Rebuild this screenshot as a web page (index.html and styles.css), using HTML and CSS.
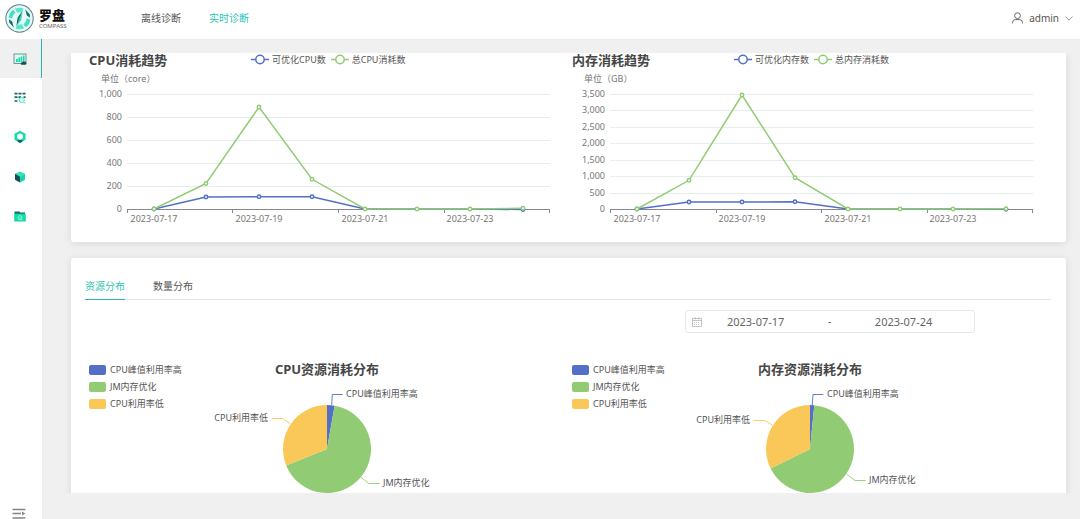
FILE: index.html
```html
<!DOCTYPE html>
<html lang="zh-CN">
<head>
<meta charset="utf-8">
<title>罗盘</title>
<link rel="stylesheet" href="styles.css">
</head>
<body>
<header class="topbar">
  <a class="brand" href="#">
    <svg class="brand-mark" viewBox="0 0 28 28" aria-hidden="true">
      <circle cx="14" cy="14" r="13.2" fill="#e6f9f6" stroke="#5b8587" stroke-width="1"/>
      <path d="M3.600 13A10.400 10.400 0 0 1 8 5.500l2.200 3A7 7 0 0 0 7 14z" fill="#3fe0c0"/>
      <path d="M24.400 15A10.400 10.400 0 0 1 20 22.500l-2.200-3A7 7 0 0 0 21 14z" fill="#3fe0c0"/>
      <path d="M9.500 4.700A10.400 10.400 0 0 1 18 4.400l-1.800 3.400-4.400.600z" fill="#59e6cc"/>
      <path d="M18.500 23.300A10.400 10.400 0 0 1 10 23.600l1.800-3.400 4.400-.600z" fill="#59e6cc"/>
      <path d="M19.500 5.200l4.300 4.800.5 3.200-3.200-2.200z" fill="#1b6d6c"/>
      <path d="M8.500 22.800l-4.300-4.800-.5-3.200 3.200 2.200z" fill="#1b6d6c"/>
      <path d="M17 6.500l-5 6.700 2.500.8z" fill="#147b78"/>
      <path d="M11 21.500l5-6.700-2.500-.8z" fill="#22c9ad"/>
      <path d="M17 6.500L14 14.500l2-.3z" fill="#37dfbe"/>
      <path d="M11 21.500l3-8-2 .3z" fill="#175f63"/>
    </svg>
    <span class="brand-text"><strong class="brand-name">罗盘</strong><small class="brand-sub">COMPASS</small></span>
  </a>
  <nav class="topnav">
    <a href="#">离线诊断</a>
    <a class="is-active" href="#">实时诊断</a>
  </nav>
  <button class="user" type="button">
    <svg class="user-icon" viewBox="0 0 11 12" aria-hidden="true"><circle cx="5.500" cy="3.700" r="2.900"/><path d="M.6 11.500V10.300Q.6 7.600 3.400 7.600H7.600Q10.400 7.600 10.400 10.300V11.500"/></svg>
    <span>admin</span>
    <svg class="chevron" viewBox="0 0 8 5" aria-hidden="true"><path d="M.5.6 4 4.100 7.500.6"/></svg>
  </button>
</header>
<div class="body">
  <aside class="sidebar">
    <nav class="menu">
      <a class="menu-item is-active" href="#" aria-label="概览"><svg viewBox="0 0 14 14"><rect x="1" y="2" width="12" height="9.500" fill="#dff8f3" stroke="#4b7f83" stroke-width=".8"/><path d="M3 7h1.800v3H3zM5.400 5.500h1.800V10H5.400zM7.800 4.500h1.500V10H7.800zM10 3.500h1.500V9H10z" fill="#16dca5"/><path d="M8 12.800q-.8-2.300 1.300-2.500.5-1.700 2.200-.9 1.700-.1 1.700 1.300.8 1.300-.6 2.100z" fill="#14525c"/></svg></a>
      <a class="menu-item" href="#" aria-label="任务列表"><svg viewBox="0 0 14 14"><path d="M1.500 2.700h3M5.500 2.700h3M9.500 2.700h3M1.500 6.200h3M5.500 6.200h2.500M10.500 6.200h2M1.500 10h3" stroke="#14656b" stroke-width="1.700"/><circle cx="8.700" cy="9" r="2.600" fill="#d9fff5" stroke="#54e2c3" stroke-width="1"/><path d="M10.600 10.800l1.800 1.700" stroke="#54e2c3"/></svg></a>
      <a class="menu-item" href="#" aria-label="诊断配置"><svg viewBox="0 0 14 14"><path d="M7 .8l5.500 3v6L7 13 1.500 9.800v-6z" fill="#13dba5"/><circle cx="7" cy="6.600" r="3" fill="#fff"/><path d="M4.700 9.900h4.600v1.600L7 13l-2.300-1.500z" fill="#115f67"/></svg></a>
      <a class="menu-item" href="#" aria-label="资源"><svg viewBox="0 0 14 14"><path d="M7 1.500l5 2.300-5 2.700-5-2.700z" fill="#32e4b4"/><path d="M2 3.800l5 2.700v6L2 9.700z" fill="#124f5a"/><path d="M12 3.800L7 6.500v6l5-2.800z" fill="#13d9a3"/></svg></a>
      <a class="menu-item" href="#" aria-label="归档"><svg viewBox="0 0 14 14"><path d="M1.500 2.500h5l1 1H12v2H1.500z" fill="#0d6f71"/><path d="M1.200 4.700h11.600v7.800H1.200z" fill="#15daa6"/><circle cx="7" cy="8.700" r="2" fill="none" stroke="#b3ffe8" stroke-width=".7"/><path d="M6 8.700l.8.800 1.600-1.600M8.500 10.200l1.200 1" fill="none" stroke="#b3ffe8" stroke-width=".7"/></svg></a>
    </nav>
    <button class="collapse" type="button" aria-label="展开菜单"><svg viewBox="0 0 14 12"><path d="M.5 2.500h13M.5 6.500H9M.5 11h13" stroke="#858585" stroke-width="1.500"/><path d="M10 4.500L13.300 6.500 10 8.500z" fill="#858585"/></svg></button>
  </aside>
  <main class="content">
    <div class="scroller">
      <section class="card trends">
        <article class="trend">
          <div class="trend-head">
            <h2 class="title">CPU消耗趋势</h2>
            <ul class="line-legend">
              <li class="blue"><svg viewBox="0 0 18 11"><path d="M0 5.500h18"/><circle cx="9" cy="5.500" r="4.200"/></svg>可优化CPU数</li>
              <li class="green"><svg viewBox="0 0 18 11"><path d="M0 5.500h18"/><circle cx="9" cy="5.500" r="4.200"/></svg>总CPU消耗数</li>
            </ul>
          </div>
          <svg class="plot" viewBox="0 0 483 160" role="img" aria-label="CPU消耗趋势">
            <path class="grid" d="M42 26.500H465M42 49.500H465M42 72.500H465M42 95.500H465M42 118.500H465"/>
            <path class="axis" d="M42 141.500H465M42.500 141v4M147.500 141v4M253.500 141v4M359.500 141v4M464.500 141v4"/>
            <text class="unit" x="16" y="14">单位（core）</text>
            <g class="y-labels"><text x="37" y="29">1,000</text><text x="37" y="52">800</text><text x="37" y="75">600</text><text x="37" y="98">400</text><text x="37" y="121">200</text><text x="37" y="144">0</text></g>
            <g class="x-labels"><text x="69" y="154">2023-07-17</text><text x="174" y="154">2023-07-19</text><text x="280" y="154">2023-07-21</text><text x="385" y="154">2023-07-23</text></g>
            <g class="series blue"><polyline points="69,141 121,129 174,128.700 227,128.700 280,141 332,141 385,141 438,141.500"/><circle cx="69" cy="141" r="1.700"/><circle cx="121" cy="129" r="1.700"/><circle cx="174" cy="128.700" r="1.700"/><circle cx="227" cy="128.700" r="1.700"/><circle cx="438" cy="141.500" r="1.700"/></g>
            <g class="series green"><polyline points="69,141 121,115.500 174,39 227,111.300 280,141 332,141 385,141 438,140.300"/><circle cx="69" cy="141" r="1.700"/><circle cx="121" cy="115.500" r="1.700"/><circle cx="174" cy="39" r="1.700"/><circle cx="227" cy="111.300" r="1.700"/><circle cx="280" cy="141" r="1.700"/><circle cx="332" cy="141" r="1.700"/><circle cx="385" cy="141" r="1.700"/><circle cx="438" cy="140.300" r="1.700"/></g>
          </svg>
        </article>
        <article class="trend">
          <div class="trend-head">
            <h2 class="title">内存消耗趋势</h2>
            <ul class="line-legend">
              <li class="blue"><svg viewBox="0 0 18 11"><path d="M0 5.500h18"/><circle cx="9" cy="5.500" r="4.200"/></svg>可优化内存数</li>
              <li class="green"><svg viewBox="0 0 18 11"><path d="M0 5.500h18"/><circle cx="9" cy="5.500" r="4.200"/></svg>总内存消耗数</li>
            </ul>
          </div>
          <svg class="plot" viewBox="0 0 483 160" role="img" aria-label="内存消耗趋势">
            <path class="grid" d="M42 26.500H465M42 42.500H465M42 59.500H465M42 75.500H465M42 92.500H465M42 108.500H465M42 125.500H465"/>
            <path class="axis" d="M42 141.500H465M42.500 141v4M148.500 141v4M253.500 141v4M359.500 141v4M464.500 141v4"/>
            <text class="unit" x="16" y="14">单位（GB）</text>
            <g class="y-labels"><text x="37" y="29">3,500</text><text x="37" y="45">3,000</text><text x="37" y="62">2,500</text><text x="37" y="78">2,000</text><text x="37" y="95">1,500</text><text x="37" y="111">1,000</text><text x="37" y="128">500</text><text x="37" y="144">0</text></g>
            <g class="x-labels"><text x="69" y="154">2023-07-17</text><text x="174" y="154">2023-07-19</text><text x="280" y="154">2023-07-21</text><text x="385" y="154">2023-07-23</text></g>
            <g class="series blue"><polyline points="69,141 121,134 174,134 227,133.700 280,141 332,141 385,141 438,141.300"/><circle cx="69" cy="141" r="1.700"/><circle cx="121" cy="134" r="1.700"/><circle cx="174" cy="134" r="1.700"/><circle cx="227" cy="133.700" r="1.700"/><circle cx="438" cy="141.300" r="1.700"/></g>
            <g class="series green"><polyline points="69,141 121,112.300 174,27 227,109.700 280,141 332,141 385,141 438,140.800"/><circle cx="69" cy="141" r="1.700"/><circle cx="121" cy="112.300" r="1.700"/><circle cx="174" cy="27" r="1.700"/><circle cx="227" cy="109.700" r="1.700"/><circle cx="280" cy="141" r="1.700"/><circle cx="332" cy="141" r="1.700"/><circle cx="385" cy="141" r="1.700"/><circle cx="438" cy="140.800" r="1.700"/></g>
          </svg>
        </article>
      </section>
      <section class="card distribution">
        <div class="tabs" role="tablist">
          <button class="tab is-active" type="button" role="tab" aria-selected="true">资源分布</button>
          <button class="tab" type="button" role="tab" aria-selected="false">数量分布</button>
        </div>
        <div class="range">
          <svg class="calendar" viewBox="0 0 10 10" aria-hidden="true"><path d="M.5 1.500h9v8h-9zM.5 3.500h9M3 0v2.500M7 0v2.500"/><path d="M2 5.500h6M2 7.500h6" stroke-dasharray="1 1"/></svg>
          <input type="text" value="2023-07-17" aria-label="开始日期">
          <span>-</span>
          <input type="text" value="2023-07-24" aria-label="结束日期">
        </div>
        <div class="pies">
          <article class="pie">
            <ul class="pie-legend"><li class="blue">CPU峰值利用率高</li><li class="green">JM内存优化</li><li class="yellow">CPU利用率低</li></ul>
            <svg viewBox="0 0 363 150" role="img" aria-label="CPU资源消耗分布">
              <text class="pie-title" x="122" y="16">CPU资源消耗分布</text>
              <path fill="#5470c6" d="M122 91V47A44 44 0 0 1 129.640 47.670z"/>
              <path fill="#91cc75" d="M122 91L129.640 47.670A44 44 0 1 1 81.200 107.480z"/>
              <path fill="#fac858" d="M122 91L81.200 107.480A44 44 0 0 1 122 47z"/>
              <g class="leaders"><path stroke="#5470c6" d="M126.700 47L127.300 36.500H137.700"/><path stroke="#fac858" d="M85 65.700L77.700 60.500H67"/><path stroke="#91cc75" d="M156 119.300L163.700 125.500H174.700"/></g>
              <text x="141" y="39">CPU峰值利用率高</text><text class="end" x="63" y="63">CPU利用率低</text><text x="178" y="128">JM内存优化</text>
            </svg>
          </article>
          <article class="pie">
            <ul class="pie-legend"><li class="blue">CPU峰值利用率高</li><li class="green">JM内存优化</li><li class="yellow">CPU利用率低</li></ul>
            <svg viewBox="0 0 363 150" role="img" aria-label="内存资源消耗分布">
              <text class="pie-title" x="122" y="16">内存资源消耗分布</text>
              <path fill="#5470c6" d="M122 91V47A44 44 0 0 1 126.300 47.200z"/>
              <path fill="#91cc75" d="M122 91L126.300 47.200A44 44 0 1 1 82.600 110.560z"/>
              <path fill="#fac858" d="M122 91L82.600 110.560A44 44 0 0 1 122 47z"/>
              <g class="leaders"><path stroke="#5470c6" d="M124.300 47L125 36.500H135.300"/><path stroke="#fac858" d="M84.300 67L76.700 62.500H65.700"/><path stroke="#91cc75" d="M158.700 116.300L167 122.500H177.700"/></g>
              <text x="139" y="39">CPU峰值利用率高</text><text class="end" x="62" y="65">CPU利用率低</text><text x="181" y="125">JM内存优化</text>
            </svg>
          </article>
        </div>
      </section>
    </div>
  </main>
</div>
</body>
</html>
```
FILE: styles.css
```css
* { box-sizing: border-box; }

body {
  margin: 0;
  height: 100vh;
  display: flex;
  flex-direction: column;
  overflow: hidden;
  background: #f0f0f0;
  color: #555;
  font: 10px/15px "Noto Sans", "Noto Sans CJK SC", sans-serif;
}

a { color: inherit; text-decoration: none; }
ul { margin: 0; padding: 0; list-style: none; }
svg { display: block; }

button {
  padding: 0;
  border: 0;
  background: none;
  color: inherit;
  font: inherit;
  cursor: pointer;
}

.topbar {
  flex: none;
  display: flex;
  align-items: center;
  height: 39px;
  padding: 0 7px 3px 5px;
  background: #fff;
  box-shadow: 0 1px 2px rgba(0, 0, 0, .03);
}

.brand { display: flex; align-items: center; gap: 5px; width: 136px; }
.brand-mark { width: 29px; height: 29px; }
.brand-text { display: flex; flex-direction: column; padding-top: 2px; color: #111; }
.brand-name { font-size: 13px; line-height: 15px; font-weight: 900; }
.brand-sub { font-size: 6px; line-height: 7px; color: #666; }

.topnav { display: flex; gap: 28px; }
.topnav .is-active, .tab.is-active { color: #2ec4b6; }

.user { display: flex; align-items: center; gap: 6px; margin-left: auto; color: #555; }
.user-icon { width: 11px; height: 12px; fill: none; stroke: #666; }
.chevron { width: 8px; height: 5px; fill: none; stroke: #777; stroke-width: .8; }

.body { flex: 1; display: flex; min-height: 0; }

.sidebar {
  flex: none;
  width: 42px;
  display: flex;
  flex-direction: column;
  background: #fff;
}

.menu { display: grid; grid-auto-rows: 1fr; height: 197px; }
.menu-item { display: flex; align-items: center; padding-left: 13px; }
.menu-item.is-active { background: #f0f0f0; border-right: 1px solid #28b7b5; }
.menu-item svg { width: 14px; height: 14px; }

.collapse { margin-top: auto; padding-left: 12px; }
.collapse svg { width: 14px; height: 12px; }

.content { flex: 1; min-width: 0; display: flex; padding: 14px 0 26px; }
.scroller { flex: 1; min-width: 0; overflow: hidden; padding: 0 14px 0 29px; }

.card {
  padding: 0 15px 14px 14px;
  background: #fff;
  border-radius: 3px;
  box-shadow: 0 1px 9px rgba(0, 0, 0, .1);
}

.trends, .pies { display: grid; grid-template-columns: 1fr 1fr; }
.trends { border-radius: 0 0 3px 3px; }

.trend-head {
  display: grid;
  grid-template-columns: 162px 1fr;
  height: 15px;
  padding-left: 4px;
}

.title { margin: 0; font-size: 13px; line-height: 15px; color: #464646; white-space: nowrap; }

.line-legend { display: flex; gap: 5px; font-size: 9px; line-height: 13px; }
.line-legend li { display: flex; align-items: center; gap: 3px; height: 13px; white-space: nowrap; }
.line-legend svg { width: 18px; height: 11px; fill: #fff; stroke-width: 1.5; }
.line-legend .blue svg { stroke: #5470c6; }
.line-legend .green svg { stroke: #91cc75; }

.plot { width: 100%; height: auto; font-size: 9px; fill: #777; }
.grid { stroke: #e6ecf0; }
.axis { stroke: #858890; }
.y-labels { text-anchor: end; }
.x-labels { text-anchor: middle; }
.series { fill: #fff; stroke-width: 1.5; }
.series polyline { fill: none; }
.series.blue { stroke: #5470c6; }
.series.green { stroke: #91cc75; }

.distribution { margin-top: 16px; padding-top: 17px; }

.tabs { display: flex; gap: 28px; border-bottom: 1px solid #dfe3e6; }
.tab { height: 25px; margin-bottom: -1px; padding-bottom: 1px; border-bottom: 1px solid transparent; }
.tab.is-active { border-color: #28b7b5; }

.range {
  display: flex;
  align-items: center;
  width: 30%;
  height: 23px;
  margin: 10px 76px 0 auto;
  padding: 0 17px 0 6px;
  border: 1px solid #e2e8ec;
  border-radius: 3px;
}

.range input {
  flex: 1;
  min-width: 0;
  padding: 0;
  border: 0;
  outline: 0;
  background: none;
  font: inherit;
  font-size: 11px;
  text-align: center;
  color: #666;
}

.range span { width: 41px; text-align: center; }
.calendar { width: 10px; height: 10px; fill: none; stroke: #b4b4b4; stroke-width: .8; }

.pies { padding-top: 25px; }
.pie { display: grid; grid-template-columns: 120px 1fr; }
.pie > svg { width: 100%; height: auto; font-size: 9px; fill: #555; }

.pie-legend { display: grid; gap: 4px; align-content: start; padding: 5px 0 0 4px; font-size: 9px; line-height: 13px; }
.pie-legend li { display: flex; align-items: center; gap: 4px; white-space: nowrap; }
.pie-legend li::before { content: ""; width: 17px; height: 10px; border-radius: 2px; }
.pie-legend .blue::before { background: #5470c6; }
.pie-legend .green::before { background: #91cc75; }
.pie-legend .yellow::before { background: #fac858; }

.pie-title { font-size: 13px; font-weight: 700; text-anchor: middle; fill: #464646; }
.leaders { fill: none; stroke-width: .9; }
.end { text-anchor: end; }
```
